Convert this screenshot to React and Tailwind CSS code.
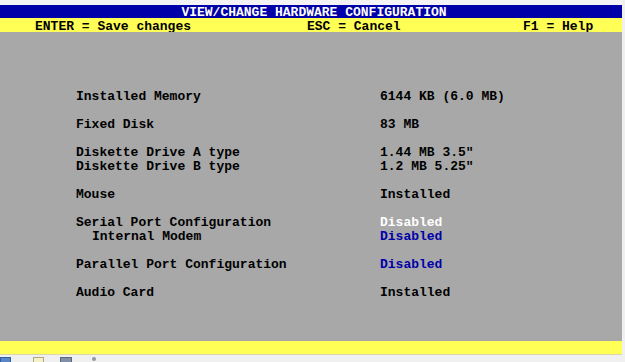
import React from "react";

const mono = { fontFamily: '"Liberation Mono", "DejaVu Sans Mono", monospace' };

function Row({ label, value, valueClass = "text-black", indent = false }) {
  return (
    <div className="flex h-[14px] items-center">
      <div className={`w-[304px] ${indent ? "pl-[16px]" : ""}`}>{label}</div>
      <div className={valueClass}>{value}</div>
    </div>
  );
}

function Blank() {
  return <div className="h-[14px]" />;
}

export default function App() {
  return (
    <div className="w-[625px] h-[362px] bg-[#f0f0f0] overflow-hidden flex flex-col" style={mono}>
      <div className="w-[622px] flex flex-col font-bold text-[13px] leading-[14px]">
        <div className="h-[5px] bg-[#f4f4f6]" />
        <div className="h-[13px] bg-[#0000a8] text-white flex items-center justify-center pl-[6px] pt-[2px]">
          VIEW/CHANGE HARDWARE CONFIGURATION
        </div>
        <div className="h-[14px] bg-[#ffff55] text-black flex items-center whitespace-pre pt-[3px]">
          <span className="w-[307px] pl-[35px]">ENTER = Save changes</span>
          <span className="w-[216px]">ESC = Cancel</span>
          <span>F1 = Help</span>
        </div>
        <div className="h-[309px] bg-[#a8a8a8] text-black pl-[76px] pt-[58px] whitespace-pre">
          <Row label="Installed Memory" value="6144 KB (6.0 MB)" />
          <Blank />
          <Row label="Fixed Disk" value="83 MB" />
          <Blank />
          <Row label="Diskette Drive A type" value={'1.44 MB 3.5"'} />
          <Row label="Diskette Drive B type" value={'1.2 MB 5.25"'} />
          <Blank />
          <Row label="Mouse" value="Installed" />
          <Blank />
          <Row label="Serial Port Configuration" value="Disabled" valueClass="text-white" />
          <Row label="Internal Modem" value="Disabled" valueClass="text-[#0000a8]" indent />
          <Blank />
          <Row label="Parallel Port Configuration" value="Disabled" valueClass="text-[#0000a8]" />
          <Blank />
          <Row label="Audio Card" value="Installed" />
        </div>
        <div className="h-[14px] bg-[#ffff55] border-b border-[#d8d8b0]" />
      </div>
      <div className="flex items-start gap-[12px] pt-[2px] pl-[0px] h-[7px]">
        <div className="w-[11px] h-[6px] bg-[#5a86c8] border border-[#2f5fa8]" />
        <div className="w-[11px] h-[6px] ml-[10px] bg-[#f4f0c8] border border-[#b0a880]" />
        <div className="w-[12px] h-[6px] ml-[4px] bg-[#8090a8] border border-[#606878]" />
        <div className="w-[4px] h-[4px] ml-[8px] rounded-full bg-[#9098a0]" />
      </div>
    </div>
  );
}
